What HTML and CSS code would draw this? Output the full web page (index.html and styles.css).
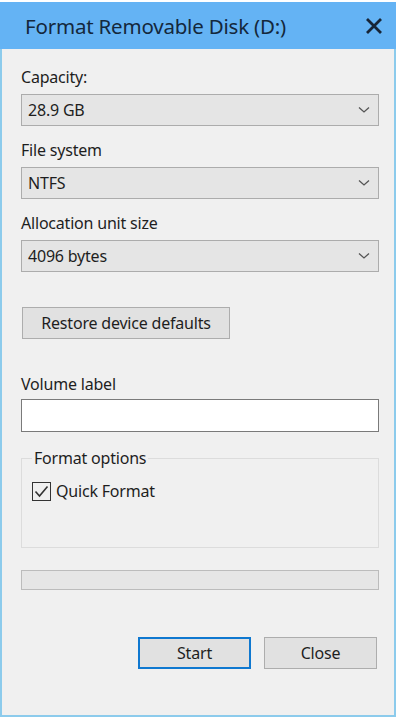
FILE: index.html
```html
<!DOCTYPE html>
<html lang="en">

<head>
    <meta charset="UTF-8" />
    <meta name="viewport" content="width=device-width, initial-scale=1.0" />
    <title>Format Removable Disk (D:)</title>
    <link rel="stylesheet" href="styles.css">
</head>

<body>
    <div class="window">
        <div class="titlebar">
            <span class="title">Format Removable Disk (D:)</span>
            <svg class="close-x" width="18" height="16" viewBox="0 0 18 16">
                <path d="M2 1 L16 15 M16 1 L2 15" stroke="#172536" stroke-width="2.8" fill="none" />
            </svg>
        </div>

        <div class="content">
            <div class="field-label first">Capacity:</div>
            <div class="select">
                <span>28.9 GB</span>
                <svg class="chevron" width="12" height="8" viewBox="0 0 12 8">
                    <path d="M1 1.5 L6 6 L11 1.5" stroke="#555" stroke-width="1.3" fill="none" />
                </svg>
            </div>

            <div class="field-label">File system</div>
            <div class="select">
                <span>NTFS</span>
                <svg class="chevron" width="12" height="8" viewBox="0 0 12 8">
                    <path d="M1 1.5 L6 6 L11 1.5" stroke="#555" stroke-width="1.3" fill="none" />
                </svg>
            </div>

            <div class="field-label">Allocation unit size</div>
            <div class="select">
                <span>4096 bytes</span>
                <svg class="chevron" width="12" height="8" viewBox="0 0 12 8">
                    <path d="M1 1.5 L6 6 L11 1.5" stroke="#555" stroke-width="1.3" fill="none" />
                </svg>
            </div>

            <button class="btn restore">Restore device defaults</button>

            <div class="field-label volume">Volume label</div>
            <div class="textbox"></div>

            <fieldset class="options">
                <legend>Format options</legend>
                <div class="check-row">
                    <span class="checkbox">
                        <svg width="15" height="13" viewBox="0 0 15 13">
                            <path d="M1.5 6.5 L5.5 11 L13.5 1.5" stroke="#333" stroke-width="1.6" fill="none" />
                        </svg>
                    </span>
                    <span>Quick Format</span>
                </div>
            </fieldset>

            <div class="progress"></div>

            <div class="actions">
                <button class="btn primary">Start</button>
                <button class="btn">Close</button>
            </div>
        </div>
    </div>
</body>

</html>
```

FILE: styles.css
```css
body {
    margin: 0;
    background: #ffffff;
    font-family: "Noto Sans", "Open Sans", sans-serif;
    color: #1e1e1e;
}

.window {
    box-sizing: border-box;
    width: 396px;
    height: 715px;
    margin-top: 2px;
    background: #f0f0f0;
    border: 2px solid #8ccbec;
    border-top: none;
    display: flex;
    flex-direction: column;
}

.titlebar {
    height: 47px;
    background: #64b3f4;
    display: flex;
    align-items: center;
    justify-content: space-between;
    padding: 0 13px 0 25px;
    margin: 0 -2px;
}

.title {
    font-size: 20.5px;
    color: #14283c;
    letter-spacing: -0.2px;
}

.content {
    display: flex;
    flex-direction: column;
    padding: 0 15px 0 19px;
}

.field-label {
    font-size: 16px;
    line-height: 20px;
    margin-top: 14px;
    margin-bottom: 7px;
    letter-spacing: -0.2px;
}

.field-label.first {
    margin-top: 18px;
}

.field-label.volume {
    margin-top: 35px;
    margin-bottom: 5px;
}

.select {
    box-sizing: border-box;
    height: 32px;
    background: #e5e5e5;
    border: 1px solid #acacac;
    display: flex;
    align-items: center;
    justify-content: space-between;
    padding: 0 8px 0 6px;
    font-size: 16px;
    letter-spacing: -0.2px;
}

.btn {
    box-sizing: border-box;
    height: 32px;
    background: #e1e1e1;
    border: 1px solid #adadad;
    font-family: inherit;
    font-size: 16px;
    color: #1e1e1e;
    letter-spacing: -0.2px;
    padding: 0;
}

.btn.restore {
    align-self: flex-start;
    width: 208px;
    margin-top: 35px;
    margin-left: 1px;
}

.textbox {
    box-sizing: border-box;
    height: 33px;
    background: #ffffff;
    border: 1px solid #7a7a7a;
}

.options {
    margin: 16px 0 0;
    padding: 13px 10px 46px;
    border: 1px solid #dcdcdc;
}

.options legend {
    font-size: 16px;
    line-height: 20px;
    padding: 0 2px;
    letter-spacing: -0.2px;
}

.check-row {
    display: flex;
    align-items: center;
    gap: 5px;
    font-size: 16px;
    line-height: 20px;
    letter-spacing: -0.2px;
}

.checkbox {
    box-sizing: border-box;
    width: 19px;
    height: 19px;
    border: 1px solid #333333;
    display: flex;
    align-items: center;
    justify-content: center;
}

.progress {
    box-sizing: border-box;
    height: 20px;
    margin-top: 22px;
    background: #e6e6e6;
    border: 1px solid #bcbcbc;
}

.actions {
    display: flex;
    justify-content: flex-end;
    gap: 13px;
    margin-top: 47px;
    padding-right: 2px;
}

.actions .btn {
    width: 113px;
}

.btn.primary {
    border: 2px solid #0f78d0;
}
```
